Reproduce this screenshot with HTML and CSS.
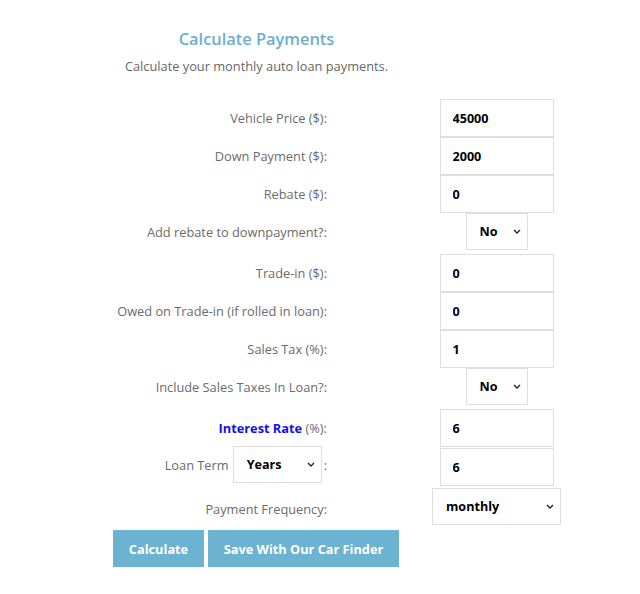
FILE: index.html
```html
<!DOCTYPE html>
<html>
<head>
<meta charset="utf-8">
<link rel="stylesheet" href="styles.css">
</head>
<body>
<div class="calc">
  <div class="head">
    <h2 class="title">Calculate Payments</h2>
    <p class="sub">Calculate your monthly auto loan payments.</p>
  </div>
  <div class="form">
    <div class="row"><label class="lbl">Vehicle Price ($):</label><div class="fld"><input class="inp" value="45000"></div></div>
    <div class="row"><label class="lbl">Down Payment ($):</label><div class="fld"><input class="inp" value="2000"></div></div>
    <div class="row"><label class="lbl">Rebate ($):</label><div class="fld"><input class="inp" value="0"></div></div>
    <div class="row row-sel"><label class="lbl">Add rebate to downpayment?:</label><div class="fld"><select class="sel sel-yn"><option>No</option><option>Yes</option></select></div></div>
    <div class="row"><label class="lbl">Trade-in ($):</label><div class="fld"><input class="inp" value="0"></div></div>
    <div class="row"><label class="lbl">Owed on Trade-in (if rolled in loan):</label><div class="fld"><input class="inp" value="0"></div></div>
    <div class="row"><label class="lbl">Sales Tax (%):</label><div class="fld"><input class="inp" value="1"></div></div>
    <div class="row row-sel"><label class="lbl">Include Sales Taxes In Loan?:</label><div class="fld"><select class="sel sel-yn"><option>No</option><option>Yes</option></select></div></div>
    <div class="row"><label class="lbl"><a class="link" href="#">Interest Rate</a> (%):</label><div class="fld"><input class="inp" value="6"></div></div>
    <div class="row row-term"><label class="lbl lbl-term">Loan Term <select class="sel sel-term"><option>Years</option><option>Months</option></select>:</label><div class="fld"><input class="inp" value="6"></div></div>
    <div class="row row-freq"><label class="lbl lbl-freq">Payment Frequency:</label><div class="fld"><select class="sel sel-freq"><option>monthly</option><option>bi-weekly</option><option>weekly</option></select></div></div>
  </div>
  <div class="actions">
    <button class="btn btn-calc">Calculate</button>
    <button class="btn btn-save">Save With Our Car Finder</button>
  </div>
</div>
</body>
</html>
```
FILE: styles.css
```css
html, body {
  margin: 0;
  padding: 0;
  background: #fff;
}
body {
  font-family: "Open Sans", "Liberation Sans", sans-serif;
  color: #6b6b6b;
}
.calc {
  width: 640px;
  padding-top: 26px;
}
.head {
  width: 513px;
  text-align: center;
}
.title {
  margin: 0;
  font-size: 16.4px;
  font-weight: 600;
  line-height: 26px;
  color: #6aafcf;
}
.sub {
  margin: 4px 0 0;
  font-size: 12.8px;
  line-height: 20px;
  color: #666;
}
.form {
  margin-top: 23px;
  display: flex;
  flex-direction: column;
}
.row {
  display: grid;
  grid-template-columns: 327px 129px;
  column-gap: 105px;
  align-items: center;
}
.row-sel {
  padding-bottom: 4px;
}
.lbl {
  text-align: right;
  font-size: 12.8px;
  line-height: 18px;
  color: #6b6b6b;
}
.link {
  color: #1010ee;
  font-weight: 700;
  text-decoration: none;
}
.fld {
  display: flex;
  justify-content: center;
}
.inp {
  box-sizing: border-box;
  width: 114px;
  height: 38px;
  margin: 0;
  border: 1px solid #dedede;
  padding: 0 0 0 12px;
  font-family: "Open Sans", sans-serif;
  font-size: 12.6px;
  font-weight: 700;
  color: #000;
  background: #fff;
  outline: none;
}
.sel {
  box-sizing: border-box;
  height: 37px;
  margin: 0;
  border: 1px solid #dedede;
  border-radius: 0;
  padding: 0 0 0 13px;
  font-family: "Open Sans", sans-serif;
  font-size: 12.6px;
  font-weight: 700;
  color: #000;
  background-color: #fff;
  -webkit-appearance: none;
  appearance: none;
  background-image: url("data:image/svg+xml;utf8,<svg xmlns='http://www.w3.org/2000/svg' width='8' height='5' viewBox='0 0 8 5'><path d='M1 1l3 3 3-3' fill='none' stroke='%23222' stroke-width='1.4'/></svg>");
  background-repeat: no-repeat;
  background-position: right 6px center;
  outline: none;
}
.sel-yn {
  width: 62px;
}
.row-term {
  margin-top: 1px;
  align-items: start;
}
.lbl-term {
  display: flex;
  justify-content: flex-end;
  align-items: center;
  gap: 4px;
  margin-top: -2px;
}
.sel-term {
  width: 89px;
  margin-right: -2px;
}
.row-freq {
  margin-top: 2px;
}
.lbl-freq {
  padding-top: 5px;
}
.sel-freq {
  width: 129px;
}
.actions {
  display: flex;
  gap: 4px;
  margin-top: 5px;
  padding-left: 113px;
}
.btn {
  height: 37px;
  border: 0;
  margin: 0;
  background: #6cb2d1;
  color: #fff;
  font-family: "Open Sans", sans-serif;
  font-size: 12.75px;
  font-weight: 700;
  padding: 0;
}
.btn-calc {
  width: 91px;
}
.btn-save {
  width: 191px;
}
```
